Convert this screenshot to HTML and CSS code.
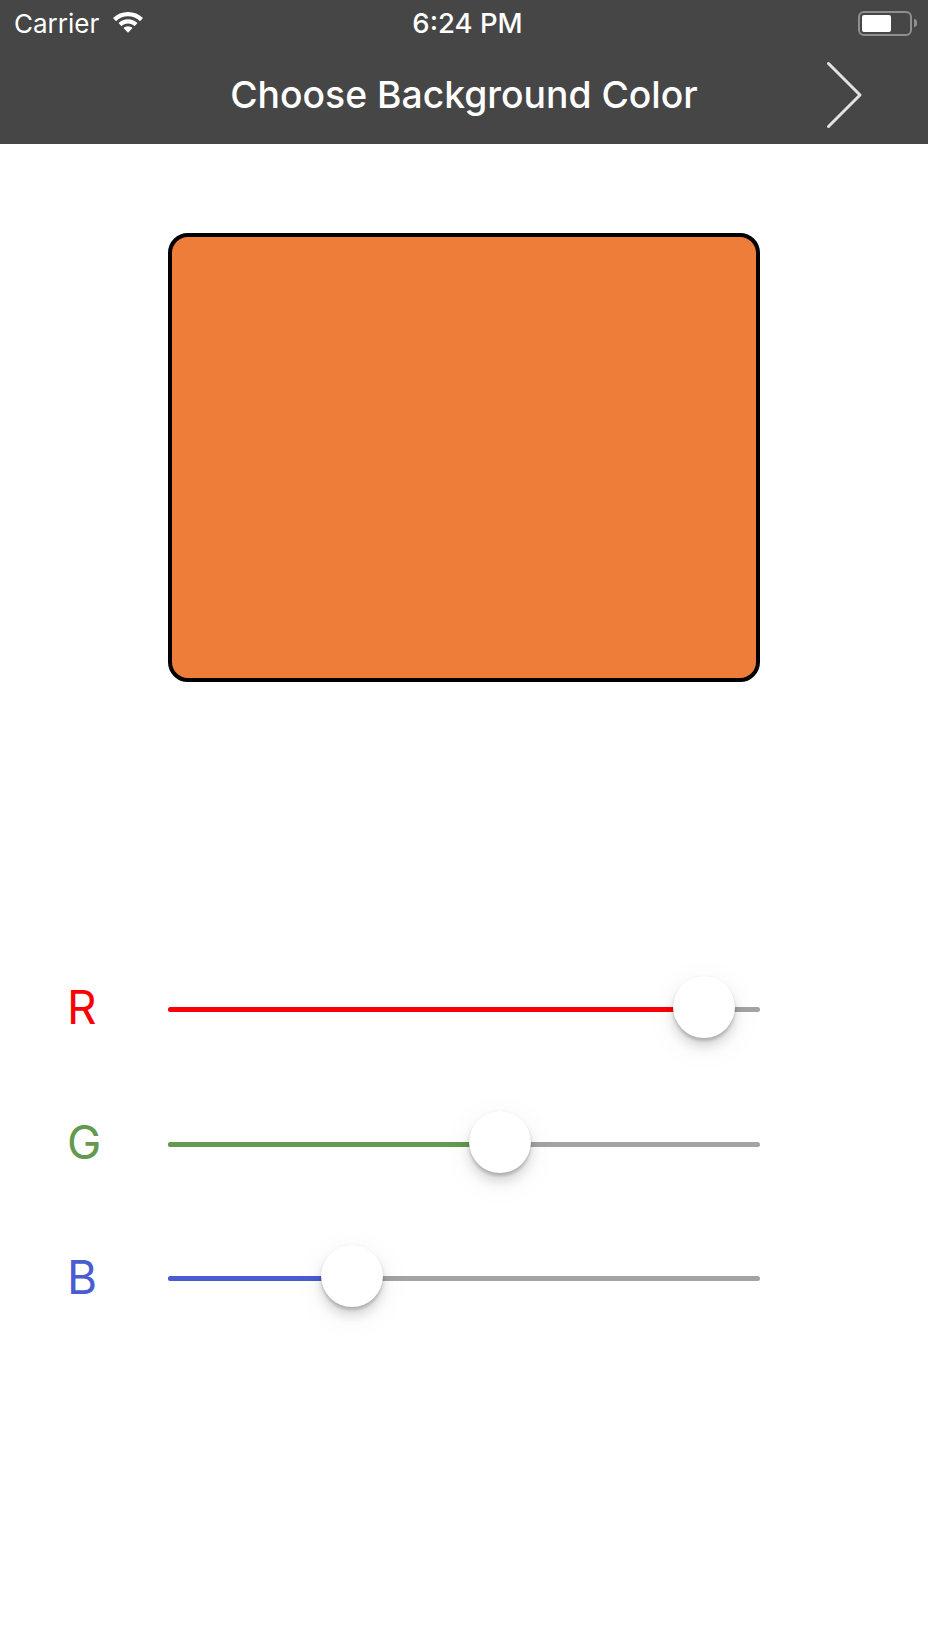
FILE: index.html
```html
<!DOCTYPE html>
<html lang="en">
<head>
<meta charset="utf-8">
<title>Choose Background Color</title>
<link rel="stylesheet" href="styles.css">
</head>
<body>
<header class="header">
  <div class="status">
    <div class="status-left">
      <span class="carrier">Carrier</span>
      <svg class="wifi" width="32" height="24" viewBox="0 0 32 24"><path fill="#fff" d="M16 2C10 2 5 4.300 1 8l3 3.200C7.300 8.100 11.400 6.300 16 6.300s8.700 1.800 12 4.900l3-3.200C27 4.300 22 2 16 2z"/><path fill="#fff" d="M16 9.300c-3.700 0-7 1.400-9.500 3.700l3 3.200c1.700-1.600 4-2.600 6.500-2.600s4.800 1 6.500 2.600l3-3.200c-2.500-2.300-5.800-3.700-9.500-3.700z"/><path fill="#fff" d="M16 16.200c-1.800 0-3.300.7-4.500 1.800l4.500 4.800 4.500-4.800c-1.200-1.100-2.700-1.800-4.500-1.800z"/></svg>
    </div>
    <span class="time">6:24 PM</span>
    <div class="battery">
      <div class="battery-body"><div class="battery-level"></div></div>
      <div class="battery-cap"></div>
    </div>
  </div>
  <div class="nav">
    <h1 class="title">Choose Background Color</h1>
    <svg class="chevron" width="38" height="68" viewBox="0 0 38 68"><path d="M2.500 2.500 34 34 2.500 65.500" fill="none" stroke="#e4e4e4" stroke-width="3" stroke-linecap="round" stroke-linejoin="round"/></svg>
  </div>
</header>
<main class="main">
  <div class="preview"></div>
  <div class="sliders">
    <div class="row">
      <span class="label label-r">R</span>
      <div class="track">
        <div class="fill fill-r" style="width: 90.5%"></div>
        <div class="thumb" style="left: 90.5%"></div>
      </div>
    </div>
    <div class="row">
      <span class="label label-g">G</span>
      <div class="track">
        <div class="fill fill-g" style="width: 56.1%"></div>
        <div class="thumb" style="left: 56.1%"></div>
      </div>
    </div>
    <div class="row">
      <span class="label label-b">B</span>
      <div class="track">
        <div class="fill fill-b" style="width: 31.1%"></div>
        <div class="thumb" style="left: 31.1%"></div>
      </div>
    </div>
  </div>
</main>
</body>
</html>
```
FILE: styles.css
```css
* { box-sizing: border-box; }
html, body { margin: 0; padding: 0; }
body {
  width: 928px;
  height: 1651px;
  background: #fff;
  font-family: Inter, "Liberation Sans", sans-serif;
  overflow: hidden;
}
.header {
  height: 144px;
  background: #464646;
  color: #fff;
  display: flex;
  flex-direction: column;
}
.status {
  height: 46px;
  padding: 0 11px 0 14px;
  display: grid;
  grid-template-columns: 1fr auto 1fr;
  align-items: center;
}
.status-left { display: flex; align-items: center; gap: 13px; }
.carrier { font-size: 26px; font-weight: 400; }
.wifi { display: block; margin-top: -2px; }
.time { font-size: 27.500px; font-weight: 500; margin-left: 4px; }
.battery { justify-self: end; display: flex; align-items: center; gap: 2px; }
.battery-body {
  width: 54px;
  height: 25px;
  border: 2px solid #8f8f8f;
  border-radius: 6px;
  padding: 2px;
}
.battery-level { width: 29px; height: 100%; background: #fff; border-radius: 2px; }
.battery-cap { width: 3px; height: 8px; background: #8f8f8f; border-radius: 0 3px 3px 0; }
.nav {
  flex: 1;
  display: flex;
  align-items: center;
  justify-content: center;
  position: relative;
}
.title { margin: 0; font-size: 37.300px; font-weight: 550; line-height: 1; }
.chevron { position: absolute; right: 64px; top: 15px; display: block; }
.main { display: flex; flex-direction: column; }
.preview {
  width: 592px;
  height: 449px;
  margin: 89px 0 0 168px;
  background: #ee7d3a;
  border: 4px solid #000;
  border-radius: 20px;
}
.sliders { margin-top: 260px; display: flex; flex-direction: column; }
.row { height: 134.800px; display: flex; align-items: center; }
.label { width: 168px; padding: 0 0 4px 67px; font-size: 46px; line-height: 1; font-weight: 400; }
.label-r { color: #fb0007; }
.label-g { color: #64994f; }
.label-b { color: #4a5cd2; }
.track {
  width: 592px;
  height: 5px;
  background: #a3a3a3;
  border-radius: 3px;
  position: relative;
}
.fill { height: 100%; border-radius: 3px 0 0 3px; }
.fill-r { background: #fb0007; }
.fill-g { background: #64994f; }
.fill-b { background: #4a5cd2; }
.thumb {
  position: absolute;
  top: -31px;
  width: 62px;
  height: 62px;
  margin-left: -31px;
  background: #fff;
  border-radius: 50%;
  box-shadow: 0 3px 3px rgba(0,0,0,0.18), 0 8px 12px rgba(0,0,0,0.14), 0 0 1px rgba(0,0,0,0.08), 0 8px 34px rgba(0,0,0,0.06);
}
```
